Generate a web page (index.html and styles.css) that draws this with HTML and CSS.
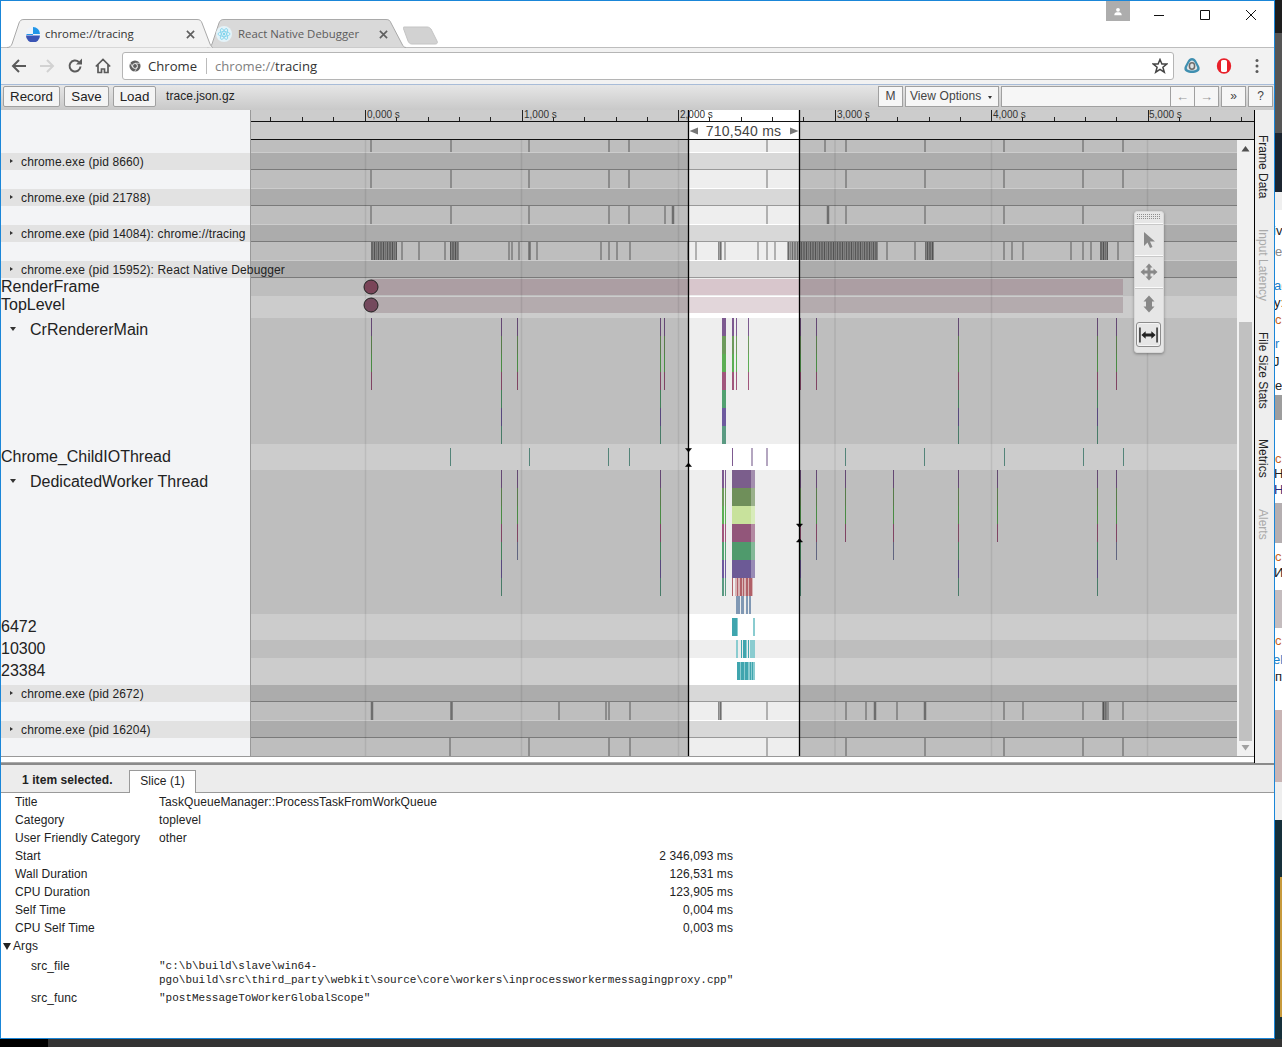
FILE: index.html
```html
<!DOCTYPE html>
<html lang="en">
<head>
<meta charset="utf-8">
<title>chrome://tracing</title>
<link rel="stylesheet" href="styles.css">
</head>
<body>
<div class="desktop">
  <div class="window">
    <header class="tabstrip">
      <div class="tab tab-active">
        <svg class="tab-shape" viewBox="0 0 206 29"><path d="M0 28.5C3 28.5 4 27 5 25L12 4C13 1.500 14 .5 17 .5H190C193 .5 194 1.500 195 4L203 25C204 27 205 28.500 206 28.500"/></svg>
        <svg class="favicon" viewBox="0 0 16 16"><circle cx="8" cy="8" r="7.500" fill="#eef3fa"/><path d="M8 1A7 7 0 0 1 15 8H8V9H1.500V8H8z" fill="#2196e8"/><path d="M1 9.500H15A7 7 0 0 1 1 9.500z" fill="#3b55b5"/></svg>
        <span class="tab-title">chrome://tracing</span>
        <svg class="tab-close" viewBox="0 0 10 10"><path d="M1 1L9 9M9 1L1 9"/></svg>
      </div>
      <div class="tab tab-back">
        <svg class="tab-shape" viewBox="0 0 199 29"><path d="M0 28.5C3 28.5 4 27 5 25L12 4C13 1.500 14 .5 17 .5H179C182 .5 183 1.500 184 4L195 25C196 27 197 28.500 199 28.500"/></svg>
        <svg class="favicon" viewBox="0 0 16 16"><circle cx="8" cy="8" r="8" fill="#e4f3f9"/><g fill="none" stroke="#7fd3ec" stroke-width=".8"><ellipse cx="8" cy="8" rx="6" ry="2.400"/><ellipse cx="8" cy="8" rx="6" ry="2.400" transform="rotate(60 8 8)"/><ellipse cx="8" cy="8" rx="6" ry="2.400" transform="rotate(120 8 8)"/></g><circle cx="8" cy="8" r="1.200" fill="#7fd3ec"/></svg>
        <span class="tab-title">React Native Debugger</span>
        <svg class="tab-close" viewBox="0 0 10 10"><path d="M1 1L9 9M9 1L1 9"/></svg>
      </div>
      <svg class="new-tab" viewBox="0 0 35 19"><path d="M1 1H24C26 1 27 2 28 3L34 15C35 17 34 18 32 18H9C7 18 6 17 5 15L1 4C0 2 0 1 1 1z"/></svg>
      <div class="profile"><svg viewBox="0 0 12 10"><circle cx="6" cy="3" r="2.300"/><path d="M1.500 9.500C1.500 6.500 3.500 6 6 6S10.500 6.500 10.500 9.500z"/></svg></div>
      <div class="win-controls">
        <svg viewBox="0 0 12 12"><path d="M1 6.500H11"/></svg>
        <svg viewBox="0 0 12 12"><path d="M1.500 1.500H10.500V10.500H1.500z"/></svg>
        <svg viewBox="0 0 12 12"><path d="M1 1L11 11M11 1L1 11"/></svg>
      </div>
    </header>
    <nav class="toolbar">
      <svg class="nav-icon" viewBox="0 0 16 16"><path class="ink" d="M15 8H2M8 2L2 8L8 14"/></svg>
      <svg class="nav-icon" viewBox="0 0 16 16"><path class="ink-off" d="M1 8H14M8 2L14 8L8 14"/></svg>
      <svg class="nav-icon" viewBox="0 0 16 16"><path class="ink" d="M13.500 8.500A5.500 5.500 0 1 1 11.800 4"/><path class="solid" d="M9 6.500H15V.5z"/></svg>
      <svg class="nav-icon" viewBox="0 0 16 16"><path class="ink thin" d="M.8 8.500L8 1.500L15.200 8.500M3 6.500V14.500H6.500V11H9.500V14.500H13V6.500"/></svg>
      <div class="omnibox">
        <svg class="chrome-mark" viewBox="0 0 14 14"><circle cx="7" cy="7" r="6.500" fill="#5f5f5f"/><circle cx="7" cy="7" r="3.200" fill="#fff"/><circle cx="7" cy="7" r="2.300" fill="#5f5f5f"/><path d="M7 3.800H13M4.200 8.500L1.500 3.500M9.800 8.500L6.500 13.500" stroke="#fff" stroke-width=".8" fill="none"/></svg>
        <span class="origin">Chrome</span>
        <span class="url"><span class="url-dim">chrome://</span>tracing</span>
        <svg class="star" viewBox="0 0 16 16"><path d="M8 1.500L9.900 6H14.800L10.900 9.200L12.300 14.200L8 11.400L3.700 14.200L5.100 9.200L1.200 6H6.100z"/></svg>
      </div>
      <svg class="ext-icon ext-first" viewBox="0 0 18 18"><path d="M9 1C11 1 12 2 13 3.500L16 9C17 11 17 13.500 15 14.500C13 15.800 11 16 9 16S5 15.800 3 14.500C1 13.500 1 11 2 9L5 3.500C6 2 7 1 9 1z" fill="#3f8fb0"/><path d="M9 3.500C10.500 3.500 11 4.500 12 6L14 10C14.500 11.500 14 12.500 12.500 13C11 13.500 10 13.500 9 13.500S7 13.500 5.500 13C4 12.500 3.500 11.500 4 10L6 6C7 4.500 7.500 3.500 9 3.500z" fill="#dfe3e5"/><ellipse cx="9" cy="9" rx="2.600" ry="3.200" fill="none" stroke="#6c6c6c" stroke-width="1.500"/></svg>
      <svg class="ext-icon" viewBox="0 0 18 18"><ellipse cx="9" cy="9" rx="7.200" ry="7.800" fill="#e8202a"/><path d="M6 4.500C6 3.500 7 3 9 3C11 3 12 3.500 12 4.500V13.500C12 14.500 11 15 9 15C7 15 6 14.500 6 13.500z" fill="#fff"/></svg>
      <svg class="menu-dots" viewBox="0 0 4 16"><circle cx="2" cy="2.500" r="1.500"/><circle cx="2" cy="8" r="1.500"/><circle cx="2" cy="13.500" r="1.500"/></svg>
    </nav>
    <div class="controls">
      <button class="btn btn-record">Record</button>
      <button class="btn btn-save">Save</button>
      <button class="btn btn-load">Load</button>
      <span class="filename">trace.json.gz</span>
      <span class="controls-spacer"></span>
      <button class="ctl ctl-m">M</button>
      <button class="ctl ctl-view">View Options <span class="mini-arrow"></span></button>
      <div class="find">
        <span class="find-input"></span>
        <button class="find-arrow">←</button>
        <button class="find-arrow">→</button>
      </div>
      <button class="ctl ctl-more">»</button>
      <button class="ctl ctl-help">?</button>
    </div>
    <div class="main">
      <section class="timeline">
        <div class="tracks">
          <div class="labels">
            <div class="l-ruler"></div>
            <div class="proc"><i class="caret"></i>chrome.exe (pid 8660)</div>
            <div class="l-gap"></div>
            <div class="proc"><i class="caret"></i>chrome.exe (pid 21788)</div>
            <div class="l-gap"></div>
            <div class="proc"><i class="caret"></i>chrome.exe (pid 14084): chrome://tracing</div>
            <div class="l-gap"></div>
            <div class="proc"><i class="caret"></i>chrome.exe (pid 15952): React Native Debugger</div>
            <div class="thread th-18">RenderFrame</div>
            <div class="thread th-18">TopLevel</div>
            <div class="l-gap4"></div>
            <div class="thread th-main"><i class="caret-open"></i>CrRendererMain</div>
            <div class="thread th-26">Chrome_ChildIOThread</div>
            <div class="thread th-worker"><i class="caret-open"></i>DedicatedWorker Thread</div>
            <div class="thread th-26">6472</div>
            <div class="thread th-18">10300</div>
            <div class="thread th-27">23384</div>
            <div class="proc"><i class="caret"></i>chrome.exe (pid 2672)</div>
            <div class="l-gap"></div>
            <div class="proc"><i class="caret"></i>chrome.exe (pid 16204)</div>
          </div>
          <svg class="canvas" viewBox="251 110 1003 646">
            <defs>
              <pattern id="dense" x="0" y="0" width="9" height="20" patternUnits="userSpaceOnUse">
                <rect width="9" height="20" fill="#a2a2a2"/>
                <rect x="0" width="1" height="20" fill="#6e6e6e"/>
                <rect x="2" width="2" height="20" fill="#828282"/>
                <rect x="5" width="1" height="20" fill="#686868"/>
                <rect x="7" width="1" height="20" fill="#8a8a8a"/>
              </pattern>
              <g id="s7">
                <rect y="0" width="1" height="18" class="c-purple"/><rect y="18" width="1" height="18" class="c-olive"/><rect y="36" width="1" height="18" class="c-green"/><rect y="54" width="1" height="18" class="c-maroon"/><rect y="72" width="1" height="18" class="c-sea"/><rect y="90" width="1" height="18" class="c-violet"/><rect y="108" width="1" height="18" class="c-teal"/>
              </g>
              <g id="s4">
                <rect y="0" width="1" height="18" class="c-purple"/><rect y="18" width="1" height="18" class="c-olive"/><rect y="36" width="1" height="18" class="c-green"/><rect y="54" width="1" height="18" class="c-maroon"/>
              </g>
              <g id="s5">
                <use href="#s4"/><rect y="72" width="1" height="18" class="c-slate"/>
              </g>
            </defs>
            <rect x="251" y="110" width="1003" height="646" fill="#fff"/>
            <path class="bg-track" d="M251 140h986v12H251zM251 170h986v18H251zM251 206h986v18H251zM251 242h986v18H251zM251 278h986v18H251zM251 318h986v126H251zM251 470h986v144H251zM251 640h986v18H251zM251 702h986v18H251zM251 738h986v18H251z"/>
            <path class="bg-head" d="M251 153h986v16H251zM251 189h986v16H251zM251 225h986v16H251zM251 261h986v16H251zM251 685h986v16H251zM251 721h986v16H251z"/>
            <path class="head-line" d="M251 169.500h986M251 205.500h986M251 241.500h986M251 277.500h986M251 701.500h986M251 737.500h986"/>

            <path class="tick" d="M371 140v12M451 140v12M529 140v12M609 140v12M629 140v12M767 140v12M825 140v12M846 140v12M925 140v12M1004 140v12M1083 140v12M1123 140v12
              M371 170v18M451 170v18M529 170v18M609 170v18M629 170v18M767 170v18M846 170v18M925 170v18M1004 170v18M1083 170v18M1123 170v18
              M371 206v18M451 206v18M529 206v18M609 206v18M629 206v18M665 206v18M767 206v18M846 206v18M925 206v18M1004 206v18M1083 206v18
              M402 242v18M419 242v18M445 242v18M509 242v18M512 242v18M519 242v18M537 242v18M601 242v18M609 242v18M617 242v18M630 242v18M688 242v18M696 242v18M725 242v18M758 242v18M767 242v18M775 242v18M887 242v18M915 242v18M1004 242v18M1012 242v18M1023 242v18M1071 242v18M1083 242v18M1091 242v18M1118 242v18
              M559 702v18M606 702v18M609 702v18M630 702v18M767 702v18M846 702v18M866 702v18M897 702v18M1004 702v18M1023 702v18M1083 702v18M1108 702v18M1123 702v18
              M450 738v18M529 738v18M609 738v18M630 738v18M767 738v18M846 738v18M925 738v18M1004 738v18M1083 738v18M1123 738v18"/>
            <path class="tick-bold" d="M673 206v18M828 206v18M529.500 242v18M451.500 702v18M372 702v18M875 702v18M925 702v18"/>
            <rect x="371" y="242" width="26" height="18" fill="url(#dense)"/>
            <rect x="450" y="242" width="9" height="18" fill="url(#dense)"/>
            <rect x="718" y="242" width="4" height="18" fill="url(#dense)"/>
            <rect x="787" y="242" width="91" height="18" fill="url(#dense)"/>
            <rect x="925" y="242" width="9" height="18" fill="url(#dense)"/>
            <rect x="1100" y="242" width="8" height="18" fill="url(#dense)"/>
            <rect x="718" y="702" width="4" height="18" fill="url(#dense)"/>
            <rect x="1102" y="702" width="5" height="18" fill="url(#dense)"/>

            <rect x="371" y="279" width="752" height="16" class="bar-a"/>
            <rect x="371" y="297" width="752" height="16" class="bar-b"/>

            <use href="#s4" x="371" y="318"/><use href="#s7" x="501" y="318"/><use href="#s4" x="517" y="318"/><use href="#s7" x="660" y="318"/><use href="#s4" x="664" y="318"/>
            <use href="#s7" x="722" y="318"/><use href="#s7" x="723" y="318"/><use href="#s7" x="724" y="318"/><use href="#s7" x="725" y="318"/>
            <use href="#s4" x="732" y="318"/><use href="#s4" x="733" y="318"/><use href="#s4" x="736" y="318"/><use href="#s4" x="748" y="318"/>
            <use href="#s4" x="800" y="318"/><use href="#s4" x="816" y="318"/><use href="#s7" x="958" y="318"/><use href="#s7" x="1097" y="318"/><use href="#s4" x="1116" y="318"/>

            <path class="c-io" d="M450 448h1v18h-1zM529 448h1v18h-1zM608 448h1v18h-1zM629 448h1v18h-1zM845 448h1v18h-1zM924 448h1v18h-1zM1004 448h1v18h-1zM1083 448h1v18h-1zM1123 448h1v18h-1z"/>
            <path class="c-io-pu" d="M732 448h1v18h-1z"/>
            <path class="c-io-pale" d="M751 448h2v18h-2zM766 448h2v18h-2z"/>

            <use href="#s7" x="501" y="470"/><use href="#s5" x="517" y="470"/><use href="#s7" x="660" y="470"/>
            <use href="#s7" x="722" y="470"/><use href="#s7" x="723" y="470"/><use href="#s7" x="725" y="470"/>
            <use href="#s7" x="800" y="470"/><use href="#s5" x="816" y="470"/><use href="#s4" x="845" y="470"/><use href="#s5" x="893" y="470"/><use href="#s7" x="958" y="470"/><use href="#s4" x="997" y="470"/><use href="#s7" x="1097" y="470"/><use href="#s5" x="1116" y="470"/>

            <rect x="732" y="470" width="23" height="18" fill="#7b5e8c"/>
            <rect x="732" y="488" width="23" height="18" fill="#6f8f5a"/>
            <rect x="732" y="506" width="23" height="18" fill="#c8e29c"/>
            <rect x="732" y="524" width="23" height="18" fill="#92567a"/>
            <rect x="732" y="542" width="23" height="18" fill="#4f9a6c"/>
            <rect x="732" y="560" width="23" height="18" fill="#6c5a96"/>
            <rect x="751" y="470" width="4" height="108" class="glaze"/>
            <path class="c-red-soft" d="M735 578h18v18h-18z"/>
            <path class="c-red" d="M732 578h1v18h-1zM737 578h1v18h-1zM740 578h2v18h-2zM743 578h1v18h-1zM746 578h2v18h-2zM749 578h3v18h-3z"/>
            <path class="c-blue" d="M736 596h4v18h-4zM741 596h3v18h-3zM746 596h2v18h-2zM749 596h2v18h-2z"/>

            <path class="c-cyan" d="M732 618h5v18h-5zM741 640h1v18h-1zM743 640h3v18h-3zM748 640h1v18h-1zM737 662h18v18h-18z"/>
            <path class="c-cyan-soft" d="M737 618h1v18h-1zM753 618h2v18h-2zM736 640h2v18h-2zM746 640h1v18h-1zM750 640h5v18h-5zM740 662h1v18h-1zM744 662h1v18h-1zM748 662h2v18h-2zM751 662h1v18h-1zM753 662h2v18h-2z"/>

            <path class="dim" d="M251 110h438v646H251zM799 110h438v646H799zM1237 110h17v30h-17z"/>

            <path class="gridline" d="M365.500 140v616M521.500 140v616M678.500 140v616M835 140v616M991.500 140v616M1147.500 140v616"/>

            <rect x="1237" y="140" width="17" height="616" fill="#f1f1f1"/>
            <rect x="1239" y="322" width="13" height="419" fill="#c1c1c1"/>
            <path class="sb-up" d="M1245.500 146L1241.500 151.500H1249.500z"/>
            <path class="sb-down" d="M1245.500 750.500L1241.500 745H1249.500z"/>

            <circle cx="371" cy="287" r="7" class="dot-a"/>
            <circle cx="371" cy="305" r="7" class="dot-b"/>

            <path class="ruler-line" d="M251 121.500H1254M251 139.500H1254"/>
            <path class="ruler-major" d="M365.500 110v11M522.500 110v11M678.500 110v11M835.500 110v11M991.500 110v11M1148.500 110v11"/>
            <path class="ruler-minor" d="M270.500 117v4M302.500 117v4M333.500 117v4M396.500 117v4M428.500 117v4M459.500 117v4M490.500 117v4M553.500 117v4M584.500 117v4M616.500 117v4M647.500 117v4M709.500 117v4M741.500 117v4M772.500 117v4M803.500 117v4M866.500 117v4M897.500 117v4M929.500 117v4M960.500 117v4M1022.500 117v4M1054.500 117v4M1085.500 117v4M1116.500 117v4M1179.500 117v4M1210.500 117v4M1241.500 117v4"/>
            <text class="ruler-text" x="367" y="118">0,000 s</text>
            <text class="ruler-text" x="524" y="118">1,000 s</text>
            <text class="ruler-text" x="680" y="118">2,000 s</text>
            <text class="ruler-text" x="837" y="118">3,000 s</text>
            <text class="ruler-text" x="993" y="118">4,000 s</text>
            <text class="ruler-text" x="1149" y="118">5,000 s</text>
            <text class="range-text" x="743.500" y="136">710,540 ms</text>
            <path class="range-arrow" d="M689.500 131L698 127.500V134.500zM798.500 131L790 127.500V134.500z"/>
            <path class="sel-line" d="M688.500 110V756M799.500 110V756"/>
            <path class="beam" d="M685.500 448.500H691.500L688.500 452zM685.500 466.500H691.500L688.500 463zM796.500 524H802.500L799.500 527.500zM796.500 542H802.500L799.500 538.500z"/>
          </svg>
        </div>
        <div class="timeline-foot"></div>
      </section>
      <aside class="side-tabs">
        <span class="side-tab">Frame Data</span>
        <span class="side-tab off">Input Latency</span>
        <span class="side-tab">File Size Stats</span>
        <span class="side-tab">Metrics</span>
        <span class="side-tab off">Alerts</span>
      </aside>
      <div class="toolbox">
        <div class="tool-grip"></div>
        <div class="tool"><svg viewBox="0 0 18 18"><path d="M4 1L15 10.500H10L12.500 16L10 17L7.500 11.500L4 15z"/></svg></div>
        <div class="tool"><svg viewBox="0 0 18 18"><path d="M9 .5L12.500 4.500H10.500V7.500H13.500V5.500L17.500 9L13.500 12.500V10.500H10.500V13.500H12.500L9 17.500L5.500 13.500H7.500V10.500H4.500V12.500L.5 9L4.500 5.500V7.500H7.500V4.500H5.500z"/></svg></div>
        <div class="tool"><svg viewBox="0 0 18 18"><path d="M9 .5L14.500 6.500H12V11.500H14.500L9 17.500L3.500 11.500H6V6.500H3.500z"/></svg></div>
        <div class="tool tool-on"><svg viewBox="0 0 20 18"><path class="tool-bars" d="M1 1V17M19 1V17"/><path d="M2.500 9L7 5V7.500H13V5L17.500 9L13 13V10.500H7V13z"/></svg></div>
      </div>
    </div>
    <section class="analysis">
      <div class="analysis-tabs">
        <span class="selected-count">1 item selected.</span>
        <span class="slice-tab">Slice (1)</span>
      </div>
      <div class="details">
        <div class="d-row"><span>Title</span><span>TaskQueueManager::ProcessTaskFromWorkQueue</span></div>
        <div class="d-row"><span>Category</span><span>toplevel</span></div>
        <div class="d-row"><span>User Friendly Category</span><span>other</span></div>
        <div class="d-row"><span>Start</span><span class="num">2 346,093 ms</span></div>
        <div class="d-row"><span>Wall Duration</span><span class="num">126,531 ms</span></div>
        <div class="d-row"><span>CPU Duration</span><span class="num">123,905 ms</span></div>
        <div class="d-row"><span>Self Time</span><span class="num">0,004 ms</span></div>
        <div class="d-row"><span>CPU Self Time</span><span class="num">0,003 ms</span></div>
        <div class="args-head"><i class="args-caret"></i>Args</div>
        <div class="a-row"><span>src_file</span><span class="mono">"c:\b\build\slave\win64-<br>pgo\build\src\third_party\webkit\source\core\workers\inprocessworkermessagingproxy.cpp"</span></div>
        <div class="a-row"><span>src_func</span><span class="mono">"postMessageToWorkerGlobalScope"</span></div>
      </div>
    </section>
  </div>
  <svg class="behind" viewBox="0 0 7 1039">
    <rect width="7" height="1039" fill="#fff"/>
    <rect width="7" height="33" fill="#1d1d1d"/>
    <rect y="33" width="7" height="100" fill="#555"/>
    <rect y="133" width="7" height="59" fill="#1c2530"/>
    <rect y="192" width="7" height="18" fill="#efefef"/>
    <rect y="395" width="7" height="25" fill="#9d9d9d"/>
    <rect y="503" width="7" height="40" fill="#b4aeb0"/>
    <rect y="590" width="7" height="38" fill="#c4bcbe"/>
    <rect y="710" width="7" height="72" fill="#c8b4b4"/>
    <rect y="782" width="7" height="38" fill="#eee"/>
    <rect y="820" width="7" height="219" fill="#16303a"/>
    <rect x="5" y="877" width="2" height="140" fill="#c79a3c"/>
    <text class="b-t" x="-2" y="235">iv</text>
    <text class="b-t b-grey" x="0" y="256">e</text>
    <text class="b-t b-blue" x="-1" y="290">ag</text>
    <text class="b-t" x="-1" y="307">y:</text>
    <text class="b-t b-or" x="0" y="324">c</text>
    <text class="b-t b-blue" x="0" y="348">r</text>
    <text class="b-t" x="-2" y="366">J</text>
    <text class="b-t" x="0" y="390">e</text>
    <text class="b-t b-or" x="0" y="463">c</text>
    <text class="b-t" x="-1" y="478">Ha</text>
    <text class="b-t b-navy" x="-1" y="494">H</text>
    <text class="b-t b-or" x="0" y="561">c</text>
    <text class="b-t" x="-1" y="577">И</text>
    <text class="b-t b-or" x="0" y="645">c</text>
    <text class="b-t b-blue" x="-2" y="664">ek</text>
    <text class="b-t" x="0" y="681">пр</text>
  </svg>
  <div class="taskbar"></div>
</div>
</body>
</html>
```

FILE: styles.css
```css
* { box-sizing: border-box; }
html, body { margin: 0; padding: 0; }
body { background: #111; font-family: "Liberation Sans", Arial, sans-serif; overflow: hidden; }
button { font-family: inherit; margin: 0; padding: 0; }

.desktop {
  width: 1282px;
  height: 1047px;
  display: grid;
  grid-template-columns: 1275px 7px;
  grid-template-rows: 1039px 8px;
  background: #111;
}
.window {
  border: 1px solid #1a86d8;
  background: #fff;
  display: flex;
  flex-direction: column;
  overflow: hidden;
  height: 1039px;
}
.behind { width: 7px; height: 1039px; display: block; }
.b-t { font: 13px "Liberation Sans", sans-serif; fill: #222; }
.b-grey { fill: #888; }
.b-blue { fill: #1a7ec8; }
.b-or { fill: #c8621a; }
.b-navy { fill: #2a2a7a; }
.taskbar {
  grid-column: 1 / 3;
  background: linear-gradient(to right, #000 48px, #333 48px);
}

/* tab strip */
.tabstrip {
  height: 46px;
  flex: none;
  display: flex;
  align-items: flex-end;
  padding-left: 6px;
  background: #fff;
  position: relative;
}
.tab {
  position: relative;
  height: 29px;
  display: flex;
  align-items: center;
  margin-bottom: -1px;
  font-family: "Open Sans", sans-serif;
  font-size: 11.400px;
}
.tab-shape { position: absolute; left: 0; top: 0; width: 100%; height: 29px; }
.tab-shape path { stroke: #a9a9a9; stroke-width: 1; }
.tab-active { width: 206px; z-index: 2; color: #333; }
.tab-active .tab-shape path { fill: #f2f2f2; }
.tab-back { width: 199px; margin-left: -6px; color: #5c5c5c; z-index: 1; }
.tab-back .tab-shape path { fill: #d9d9d9; }
.favicon { width: 16px; height: 16px; position: relative; flex: none; }
.tab-back .favicon { margin-left: 9px; margin-right: 6px; }
.tab-active .favicon { margin-left: 18px; margin-right: 4px; }
.tab-title { position: relative; flex: 1; white-space: nowrap; }
.tab-close { position: relative; flex: none; width: 9px; height: 9px; margin-right: 18px; margin-top: 1px; }
.tab-close path { stroke: #5f5f5f; stroke-width: 1.800; fill: none; }
.new-tab { width: 35px; height: 19px; margin-left: -3px; margin-bottom: 2px; flex: none; position: relative; }
.new-tab path { fill: #d2d2d2; stroke: #c4c4c4; }
.profile {
  position: absolute;
  left: 1105px;
  top: 0;
  width: 24px;
  height: 20px;
  background: #adadad;
  display: flex;
  align-items: center;
  justify-content: center;
}
.profile svg { width: 10px; height: 9px; fill: #fff; }
.win-controls {
  position: absolute;
  left: 1152px;
  top: 8px;
  display: flex;
  gap: 34px;
}
.win-controls svg { width: 12px; height: 12px; fill: none; stroke: #111; stroke-width: 1; }

/* address toolbar */
.toolbar {
  height: 37px;
  flex: none;
  display: flex;
  align-items: center;
  background: #f2f2f2;
  border-top: 1px solid #bdbdbd;
  padding-left: 10px;
}
.nav-icon { width: 16px; height: 16px; flex: none; margin-right: 12px; fill: none; }
.ink { stroke: #5a5a5a; stroke-width: 2; fill: none; }
.ink.thin { stroke-width: 1.700; }
.ink-off { stroke: #d2d2d2; stroke-width: 2; fill: none; }
.solid { fill: #5a5a5a; }
.omnibox {
  width: 1052px;
  height: 28px;
  margin-left: -1px;
  flex: none;
  background: #fff;
  border: 1px solid #b5b5b5;
  border-radius: 3px;
  display: flex;
  align-items: center;
  padding-left: 6px;
  font-family: "Open Sans", sans-serif;
  font-size: 13.100px;
  color: #333;
}
.chrome-mark { width: 12px; height: 12px; flex: none; margin-right: 7px; }
.origin { padding-right: 9px; border-right: 1px solid #bbb; line-height: 16px; margin-right: 8px; }
.url { flex: 1; color: #333; }
.url-dim { color: #808080; }
.star { width: 16px; height: 16px; flex: none; margin-right: 5px; fill: none; stroke: #444; stroke-width: 1.500; }
.ext-icon { width: 18px; height: 18px; flex: none; margin-left: 14px; }
.ext-first { margin-left: 9px; }
.menu-dots { width: 4px; height: 16px; flex: none; margin-left: 22px; fill: #5a5a5a; }

/* tracing controls */
.controls {
  height: 26px;
  flex: none;
  display: flex;
  align-items: center;
  padding: 0 1px 3px 2px;
  border-top: 1px solid #a8bcd8;
  background: linear-gradient(#e6e6e6, #c9c9c9);
}
.btn {
  height: 21px;
  background: #f4f4f4;
  border: 1px solid #a0a0a0;
  border-radius: 2px;
  font-size: 13.333px;
  color: #222;
  margin-right: 4px;
}
.btn-record { width: 57px; }
.btn-save { width: 45px; }
.btn-load { width: 43px; }
.filename { font-size: 12px; color: #222; margin-left: 6px; letter-spacing: .05px; }
.controls-spacer { flex: 1; }
.ctl {
  height: 21px;
  background: #f6f6f6;
  border: 1px solid #a0a0a0;
  font-size: 12px;
  color: #444;
  margin-right: 2px;
}
.ctl-m { width: 25px; }
.ctl-view { width: 94px; text-align: left; padding-left: 4px; white-space: nowrap; letter-spacing: .08px; }
.mini-arrow {
  display: inline-block;
  border-left: 2.500px solid transparent;
  border-right: 2.500px solid transparent;
  border-top: 3px solid #333;
  margin-left: 3px;
  vertical-align: 1px;
}
.find { display: flex; height: 21px; width: 218px; margin-right: 2px; }
.find-input { width: 170px; background: #f6f6f6; border: 1px solid #a0a0a0; }
.find-arrow {
  width: 24px;
  background: #f6f6f6;
  border: 1px solid #a0a0a0;
  border-left: 0;
  font-size: 13px;
  color: #999;
}
.ctl-more { width: 25px; }
.ctl-help { width: 25px; margin-right: 0; }

/* main area */
.main {
  height: 653px;
  flex: none;
  display: flex;
  position: relative;
}
.timeline { width: 1253px; flex: none; display: flex; flex-direction: column; }
.tracks { display: flex; height: 646px; }
.labels {
  width: 250px;
  flex: none;
  background: #f3f4f6;
  border-right: 1px solid #999;
  position: relative;
  z-index: 1;
  color: #222;
}
.l-ruler { height: 43px; }
.l-gap { height: 19px; }
.l-gap4 { height: 4px; }
.proc {
  height: 17px;
  line-height: 19px;
  font-size: 12px;
  letter-spacing: .13px;
  padding-left: 20px;
  white-space: nowrap;
  background: #e2e2e2;
  position: relative;
}
.caret {
  position: absolute;
  left: 9px;
  top: 6px;
  border-top: 2.500px solid transparent;
  border-bottom: 2.500px solid transparent;
  border-left: 3px solid #333;
}
.caret-open {
  position: absolute;
  left: 9px;
  top: 9px;
  border-left: 3px solid transparent;
  border-right: 3px solid transparent;
  border-top: 4px solid #333;
}
.thread { font-size: 16px; line-height: 18px; padding-left: 0; white-space: nowrap; position: relative; }
.th-18 { height: 18px; }
.th-26 { height: 26px; line-height: 25px; }
.th-27 { height: 27px; line-height: 25px; }
.th-main { height: 126px; padding-left: 29px; line-height: 24px; }
.th-worker { height: 144px; padding-left: 29px; line-height: 24px; }

.canvas { width: 1003px; height: 646px; flex: none; display: block; }
.bg-track { fill: #eee; }
.bg-head { fill: #d8d8d8; }
.head-line { stroke: #999; fill: none; }
.tick { stroke: #909090; stroke-width: 1.300; fill: none; }
.tick-bold { stroke: #8a8a8a; stroke-width: 2.500; fill: none; }
.bar-a { fill: #d8c6cc; }
.bar-b { fill: #e2d6da; }
.c-purple { fill: #7d5a90; }
.c-olive { fill: #6d9a5c; }
.c-green { fill: #5cae54; }
.c-maroon { fill: #a0567c; }
.c-sea { fill: #52a070; }
.c-violet { fill: #6d5a9e; }
.c-teal { fill: #5a9a82; }
.c-slate { fill: #7a7fa0; }
.c-io { fill: #6aa598; }
.c-io-pu { fill: #7d5a90; }
.c-io-pale { fill: #b4a6c0; }
.c-red-soft { fill: #d8b4b6; }
.c-red { fill: #b06068; }
.c-blue { fill: #8098b4; }
.c-cyan { fill: #3fa5ae; }
.c-cyan-soft { fill: #8accd0; }
.glaze { fill: rgba(255, 255, 255, .3); }
.dim { fill: rgba(0, 0, 0, .2); }
.gridline { stroke: rgba(0, 0, 0, .08); stroke-width: 1.500; fill: none; }
.sb-up { fill: #505050; }
.sb-down { fill: #a0a0a0; }
.dot-a { fill: #7a4458; stroke: #222; stroke-width: 1; }
.dot-b { fill: #74495d; stroke: #222; stroke-width: 1; }
.ruler-line { stroke: #111; stroke-width: 1; fill: none; }
.ruler-major { stroke: #222; stroke-width: 1; fill: none; }
.ruler-minor { stroke: #222; stroke-width: 1; fill: none; }
.ruler-text { font: 10px "Liberation Sans", sans-serif; fill: #333; }
.range-text { font: 14px "Liberation Sans", sans-serif; fill: #444; text-anchor: middle; letter-spacing: .25px; }
.range-arrow { fill: #777; }
.sel-line { stroke: #000; stroke-width: 1.300; fill: none; }
.beam { fill: #000; stroke: #000; stroke-width: .5; }
.timeline-foot {
  height: 7px;
  background: #fff;
  border-top: 1px solid #999;
  border-bottom: 1px solid #aaa;
}

.side-tabs {
  width: 20px;
  flex: none;
  background: #eee;
  border-left: 1px solid #000;
  display: flex;
  flex-direction: column;
  align-items: center;
  gap: 30.700px;
  padding-top: 25px;
  padding-right: 3px;
}
.side-tab {
  writing-mode: vertical-rl;
  font-size: 12px;
  line-height: 16px;
  color: #222;
  white-space: nowrap;
}
.side-tab.off { color: #aaa; }

.toolbox {
  position: absolute;
  left: 1133px;
  top: 101px;
  width: 30px;
  height: 142px;
  background: #e6e6e6;
  border: 1px solid #d8d8d8;
  border-radius: 3px;
  box-shadow: 0 1px 3px rgba(0, 0, 0, .35);
  z-index: 2;
}
.tool-grip {
  height: 6px;
  margin: 2px 2px 3px;
  background-image:
    repeating-linear-gradient(0deg, #e6e6e6 0 1px, transparent 1px 2px),
    repeating-linear-gradient(90deg, #8e8e8e 0 1px, transparent 1px 2px);
}
.tool {
  height: 32px;
  border-top: 1px solid #fafafa;
  box-shadow: inset 0 1px 0 #c8c8c8;
  display: flex;
  align-items: center;
  justify-content: center;
}
.tool svg { width: 18px; height: 18px; fill: #888; }
.tool-on {
  height: 25px;
  width: 25px;
  margin: 3px 1px 0 1px;
  border: 1px solid #8c8c8c;
  border-radius: 3px;
  box-shadow: inset 0 0 0 1px #f4f4f4;
}
.tool-on svg { fill: #222; width: 19px; }
.tool-bars { stroke: #222; stroke-width: 1.500; fill: none; }

/* analysis */
.analysis {
  flex: 1;
  min-height: 0;
  border-top: 2px solid #8a8a8a;
  font-size: 12px;
  letter-spacing: .08px;
  color: #222;
}
.analysis-tabs {
  height: 28px;
  background: #ececec;
  border-bottom: 1px solid #9a9a9a;
  display: flex;
  align-items: flex-end;
  padding-left: 21px;
}
.selected-count { font-weight: 700; width: 107px; line-height: 30px; height: 27px; }
.slice-tab {
  width: 67px;
  height: 23px;
  margin-bottom: -1px;
  background: #fff;
  border: 1px solid #9a9a9a;
  border-bottom: 0;
  text-align: center;
  line-height: 21px;
}
.d-row, .a-row { display: grid; grid-template-columns: 144px 574px; margin-left: 14px; }
.d-row { height: 18px; line-height: 18px; }
.num { text-align: right; }
.args-head { height: 18px; line-height: 18px; padding-left: 12px; position: relative; }
.args-caret {
  position: absolute;
  left: 2px;
  top: 6px;
  border-left: 4px solid transparent;
  border-right: 4px solid transparent;
  border-top: 7px solid #222;
}
.a-row { line-height: 14px; margin-top: 4px; }
.a-row > span:first-child { padding-left: 16px; }
.mono { font-family: "Liberation Mono", monospace; font-size: 11px; letter-spacing: 0; white-space: nowrap; }
```
